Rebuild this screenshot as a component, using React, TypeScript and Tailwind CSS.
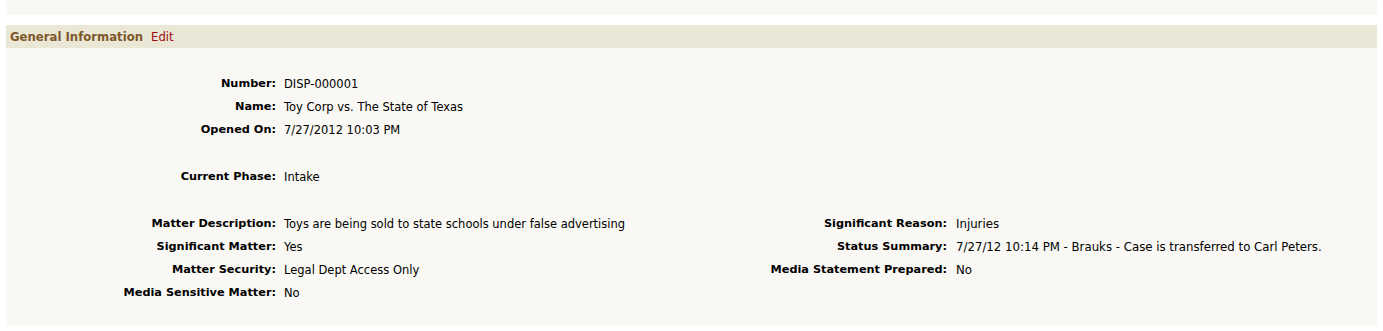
import React from 'react';

type Field = { label: string; value: string } | null;

const leftFields: Field[] = [
  { label: 'Number:', value: 'DISP-000001' },
  { label: 'Name:', value: 'Toy Corp vs. The State of Texas' },
  { label: 'Opened On:', value: '7/27/2012 10:03 PM' },
];

const detailRows: [Field, Field][] = [
  [
    { label: 'Matter Description:', value: 'Toys are being sold to state schools under false advertising' },
    { label: 'Significant Reason:', value: 'Injuries' },
  ],
  [
    { label: 'Significant Matter:', value: 'Yes' },
    { label: 'Status Summary:', value: '7/27/12 10:14 PM - Brauks - Case is transferred to Carl Peters.' },
  ],
  [
    { label: 'Matter Security:', value: 'Legal Dept Access Only' },
    { label: 'Media Statement Prepared:', value: 'No' },
  ],
  [{ label: 'Media Sensitive Matter:', value: 'No' }, null],
];

const Row: React.FC<{ left: Field; right?: Field }> = ({ left, right }) => (
  <div className="grid h-[23px] grid-cols-[270px_416px_255px_1fr] items-center whitespace-nowrap">
    <div className="text-right text-[11.3px] font-bold">{left?.label}</div>
    <div className="pl-2 text-[11.5px]">{left?.value}</div>
    <div className="text-right text-[11.3px] font-bold">{right?.label}</div>
    <div className="pl-[9px] text-[11.75px]">{right?.value}</div>
  </div>
);

const App: React.FC = () => {
  return (
    <div
      className="min-h-[331px] bg-white px-[4px] text-[11px] text-black"
      style={{ fontFamily: 'Verdana, "DejaVu Sans", sans-serif' }}
    >
      <div className="mx-[2px] h-[15px] bg-[#f9f8f4]" />

      <div className="mx-[2px] mt-[10px]">
        <div className="flex h-[23px] items-center gap-[8px] bg-[#ebe7d6] pl-[4px] pt-[2px] text-[11.7px]">
          <span className="font-bold text-[#7d5a2b]">General Information</span>
          <span className="text-[#9b0d14]">Edit</span>
        </div>

        <div className="bg-[#f9f8f4] pb-[21px] pt-[25px]">
          {leftFields.map((f) => (
            <Row key={f!.label} left={f} />
          ))}
          <div className="h-[24px]" />
          <Row left={{ label: 'Current Phase:', value: 'Intake' }} />
          <div className="h-[24px]" />
          {detailRows.map(([l, r]) => (
            <Row key={l!.label} left={l} right={r} />
          ))}
        </div>
      </div>
    </div>
  );
};

export default App;
